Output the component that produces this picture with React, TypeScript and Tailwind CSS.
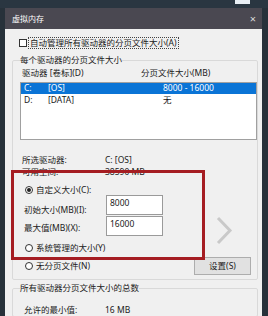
export default function App() {
  return (
    <div className="relative w-[268px] h-[316px] overflow-hidden bg-[#27313a] font-['Noto_Sans','Noto_Sans_CJK_SC',sans-serif] text-[8.5px] text-[#1a1a1a]">
      <div className="h-[8px] bg-[#2a3641] flex">
        <div className="ml-[235px] w-[15px] h-[4px] bg-[#e8eef4]" />
      </div>
      <div className="ml-[5px] w-[257px] flex flex-col">
        <div className="h-[21px] bg-[#4a4851] flex items-center justify-between pl-[7px] pr-[6px]">
          <span className="text-white text-[8px] leading-none">虚拟内存</span>
          <span className="text-[#d8d8d8] text-[11px] leading-none">×</span>
        </div>
        <div className="bg-[#f0f0f0] h-[287px] flex flex-col">
          <div className="mt-[8px] h-[12px] flex items-center pl-[14px]">
            <div className="w-[8px] h-[8px] border border-[#333] bg-white" />
            <span className="ml-[1px] px-[1px] border border-dotted border-[#444] leading-[10px]">自动管理所有驱动器的分页文件大小(A)</span>
          </div>
          <fieldset className="mt-[5px] ml-[7px] w-[246px] border border-[#d9d9d9] rounded-[2px] pb-[4px]">
            <legend className="ml-[7px] leading-[12px]">每个驱动器的分页文件大小</legend>
            <div className="mt-[1px] h-[12px] flex items-center">
              <span className="ml-[9px] w-[119px]">驱动器 [卷标](D)</span>
              <span>分页文件大小(MB)</span>
            </div>
            <div className="mt-[3px] ml-[7px] w-[237px] h-[58px] bg-white border border-[#a0a0a0] flex flex-col">
              <div className="h-[11px] bg-[#0a74d6] text-white flex items-center">
                <span className="ml-[3px] w-[24px]">C:</span>
                <span className="w-[115px]">[OS]</span>
                <span>8000 - 16000</span>
              </div>
              <div className="h-[12px] flex items-center">
                <span className="ml-[3px] w-[24px]">D:</span>
                <span className="w-[115px]">[DATA]</span>
                <span>无</span>
              </div>
            </div>
            <div className="mt-[14px] h-[12px] flex items-center">
              <span className="ml-[9px] w-[83px]">所选驱动器:</span>
              <span>C: [OS]</span>
            </div>
            <div className="h-[12px] flex items-center">
              <span className="ml-[9px] w-[83px]">可用空间:</span>
              <span>38590 MB</span>
            </div>
            <div className="mt-[7px] h-[10px] flex items-center">
              <Radio checked />
              <span className="ml-[3px]">自定义大小(C):</span>
            </div>
            <div className="h-[20px] flex items-start">
              <span className="ml-[11px] mt-[10px] w-[82px] leading-[10px]">初始大小(MB)(I):</span>
              <div className="w-[57px] h-[20px] bg-white border border-[#9a9a9a] pl-[3px] pt-[2px] leading-[10px]">8000</div>
            </div>
            <div className="mt-[1px] h-[20px] flex items-start">
              <span className="ml-[11px] mt-[7px] w-[82px] leading-[10px]">最大值(MB)(X):</span>
              <div className="w-[57px] h-[20px] bg-white border border-[#9a9a9a] pl-[3px] pt-[2px] leading-[10px]">16000</div>
            </div>
            <div className="mt-[7px] h-[10px] flex items-center">
              <Radio />
              <span className="ml-[3px]">系统管理的大小(Y)</span>
            </div>
            <div className="mt-[4px] h-[18px] flex items-center">
              <Radio />
              <span className="ml-[3px] w-[158px] shrink-0">无分页文件(N)</span>
              <div className="w-[57px] h-[18px] shrink-0 bg-[#e1e1e1] border border-[#adadad] flex items-center justify-center">设置(S)</div>
            </div>
          </fieldset>
          <fieldset className="mt-[2px] ml-[7px] w-[246px] border border-[#d9d9d9] rounded-[2px] h-[40px]">
            <legend className="ml-[7px] leading-[12px]">所有驱动器分页文件大小的总数</legend>
            <div className="mt-[10px] h-[12px] flex items-center">
              <span className="ml-[11px] w-[81px]">允许的最小值:</span>
              <span>16 MB</span>
            </div>
          </fieldset>
        </div>
      </div>
      <div className="absolute left-[11px] top-[170px] w-[194px] h-[90px] border-[3px] border-[#a51d22]" />
      <svg className="absolute left-[215px] top-[216px]" width="18" height="29" viewBox="0 0 18 29">
        <polyline points="3,2 15,14.5 3,27" fill="none" stroke="#c9c9c9" strokeWidth="3" />
      </svg>
    </div>
  );
}

function Radio({ checked = false }: { checked?: boolean }) {
  return (
    <div className="ml-[12px] w-[8px] h-[8px] shrink-0 rounded-full border border-[#333] bg-white flex items-center justify-center">
      {checked && <div className="w-[4px] h-[4px] rounded-full bg-[#222]" />}
    </div>
  );
}
